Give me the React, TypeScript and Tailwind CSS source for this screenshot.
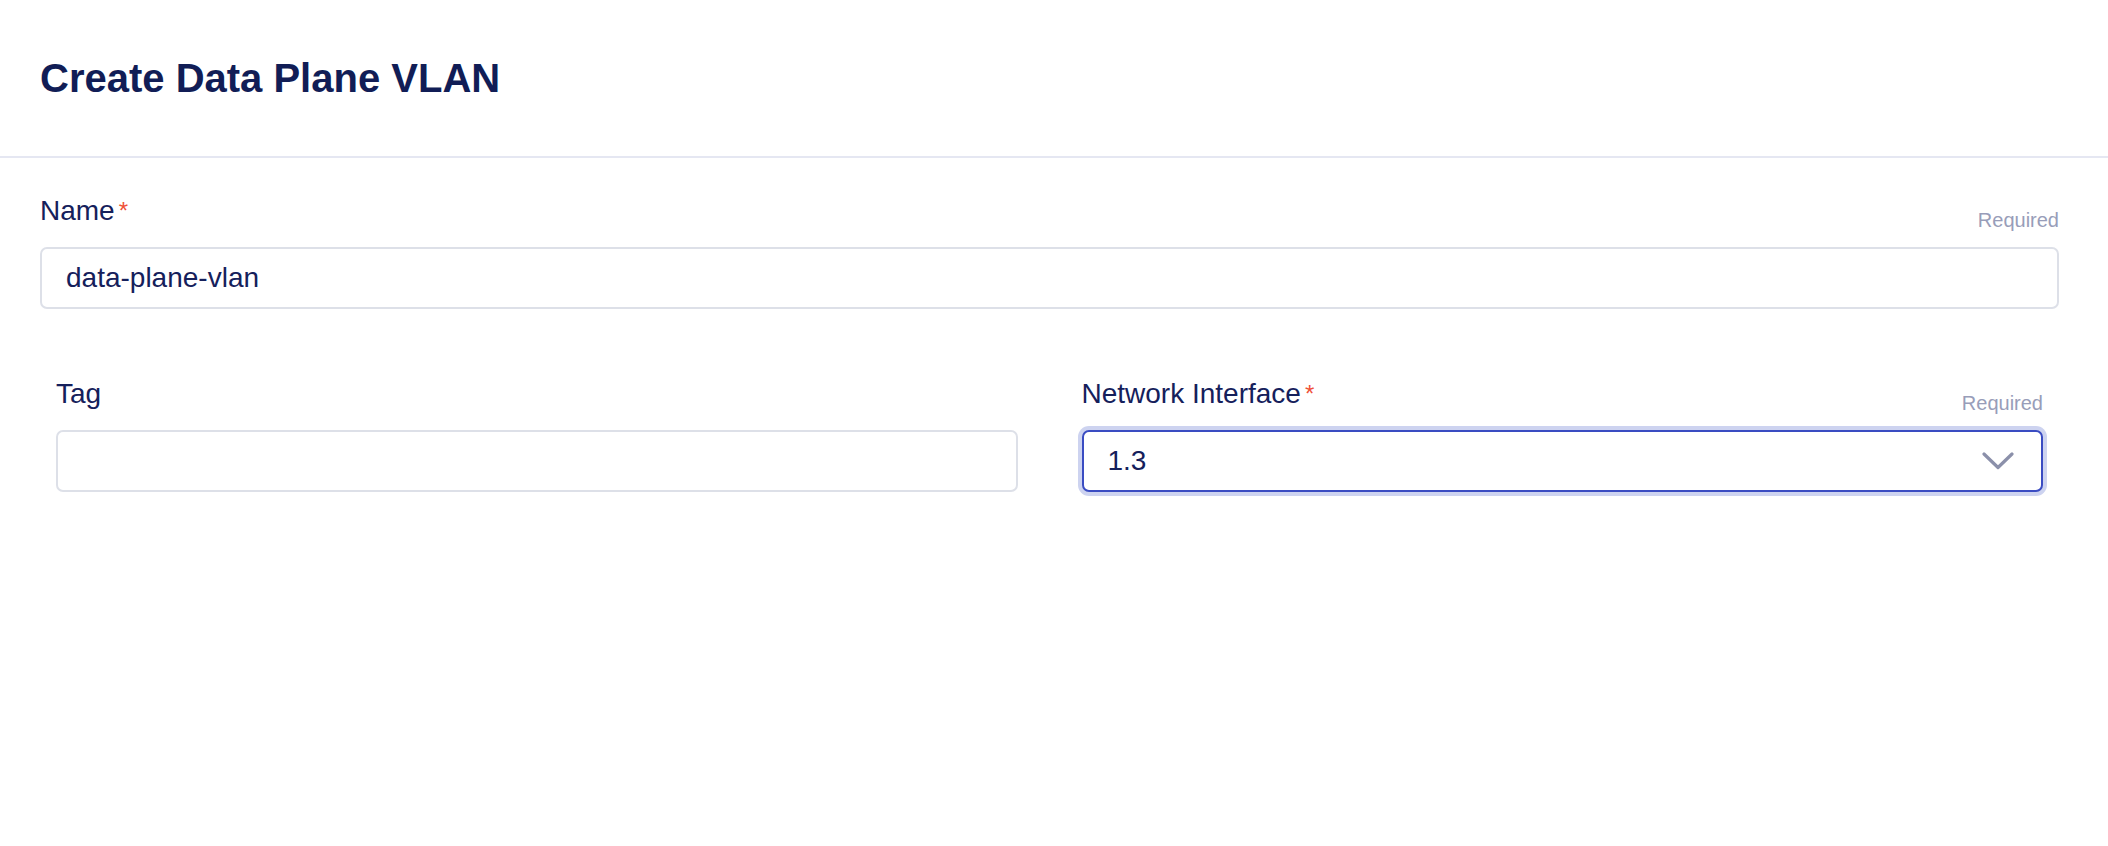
import React from "react";

function Label({ text, required }: { text: string; required?: boolean }) {
  return (
    <div className="flex items-end justify-between">
      <div className="flex items-start text-[28px] leading-[32px] text-[#15205b]">
        <span>{text}</span>
        {required && (
          <span className="ml-[4px] mt-[4px] text-[24px] leading-[24px] text-[#ef5139]">*</span>
        )}
      </div>
      {required && (
        <span className="text-[20px] leading-[14px] text-[#989db9]">Required</span>
      )}
    </div>
  );
}

export default function App() {
  return (
    <div
      className="min-h-[846px] w-full bg-white"
      style={{ fontFamily: '"Liberation Sans", Arial, sans-serif' }}
    >
      <div className="px-[40px] py-[54px]">
        <h1 className="text-[40px] font-bold leading-[48px] text-[#111d56]">
          Create Data Plane VLAN
        </h1>
      </div>
      <div className="h-[2px] bg-[#e5e7f2]" />
      <div className="pl-[40px] pr-[49px] pt-[37px]">
        <div>
          <Label text="Name" required />
          <div className="mt-[20px] flex h-[62px] items-center rounded-[7px] border-2 border-[#dde0e8] bg-white pl-[24px] text-[28px] text-[#15205b]">
            data-plane-vlan
          </div>
        </div>
        <div className="mt-[69px] grid grid-cols-2 gap-[64px] px-[16px]">
          <div>
            <Label text="Tag" />
            <div className="mt-[20px] h-[62px] rounded-[7px] border-2 border-[#dde0e8] bg-white" />
          </div>
          <div>
            <Label text="Network Interface" required />
            <div className="mt-[20px] flex h-[62px] items-center justify-between rounded-[7px] border-2 border-[#3a4cc2] bg-white pl-[24px] pr-[27px] text-[28px] text-[#15205b] shadow-[0_0_0_4px_#cdd3f0]">
              <span>1.3</span>
              <svg width="32" height="18" viewBox="0 0 32 18" fill="none">
                <path
                  d="M2 2 L16 15.5 L30 2"
                  stroke="#8b90aa"
                  strokeWidth="3.2"
                  strokeLinecap="round"
                  strokeLinejoin="round"
                />
              </svg>
            </div>
          </div>
        </div>
      </div>
    </div>
  );
}
